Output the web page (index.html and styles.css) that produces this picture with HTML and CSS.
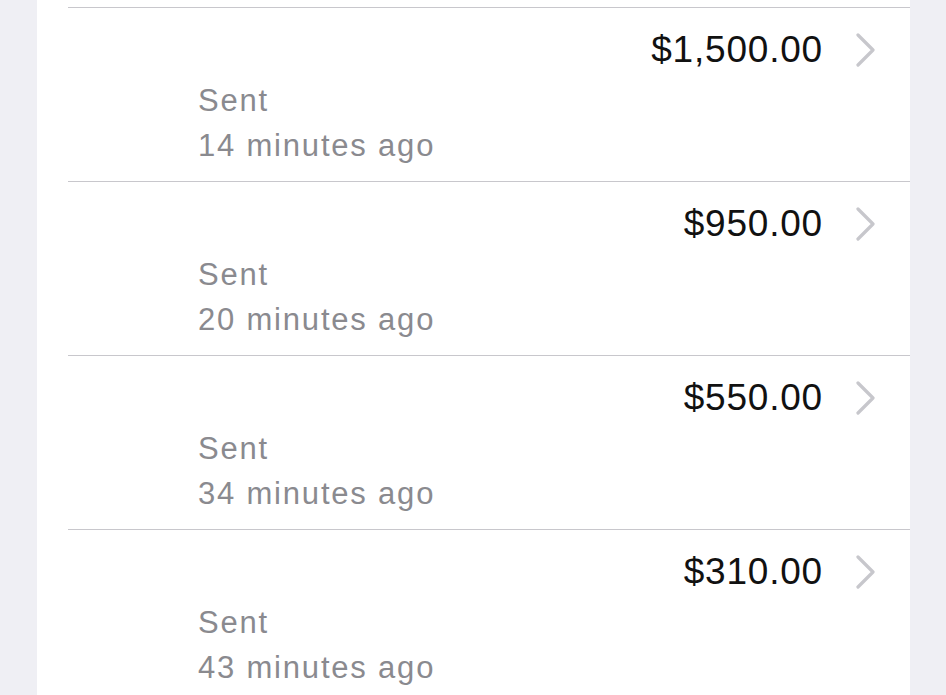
FILE: index.html
```html
<!DOCTYPE html>
<html lang="en">
<head>
  <meta charset="UTF-8">
  <title>Activity</title>
  <link rel="stylesheet" href="styles.css">
</head>
<body>
  <div class="panel">
    <ul class="list">
      <li class="item">
        <div class="top">
          <span class="amount">$1,500.00</span>
          <svg class="chevron" width="20" height="34" viewBox="0 0 20 34"><path d="M2 2 L17 17 L2 32" /></svg>
        </div>
        <div class="status">Sent</div>
        <div class="time">14 minutes ago</div>
      </li>
      <li class="item">
        <div class="top">
          <span class="amount">$950.00</span>
          <svg class="chevron" width="20" height="34" viewBox="0 0 20 34"><path d="M2 2 L17 17 L2 32" /></svg>
        </div>
        <div class="status">Sent</div>
        <div class="time">20 minutes ago</div>
      </li>
      <li class="item">
        <div class="top">
          <span class="amount">$550.00</span>
          <svg class="chevron" width="20" height="34" viewBox="0 0 20 34"><path d="M2 2 L17 17 L2 32" /></svg>
        </div>
        <div class="status">Sent</div>
        <div class="time">34 minutes ago</div>
      </li>
      <li class="item">
        <div class="top">
          <span class="amount">$310.00</span>
          <svg class="chevron" width="20" height="34" viewBox="0 0 20 34"><path d="M2 2 L17 17 L2 32" /></svg>
        </div>
        <div class="status">Sent</div>
        <div class="time">43 minutes ago</div>
      </li>
    </ul>
  </div>
</body>
</html>
```

FILE: styles.css
```css
html, body { margin: 0; height: 100%; }
body { background: #efeff4; font-family: "Liberation Sans", Arial, sans-serif; overflow: hidden; }
.panel { margin: 0 36px 0 37px; background: #fff; height: 695px; padding-top: 7px; box-sizing: border-box; }
.list { list-style: none; margin: 0; padding: 0; }
.item {
  margin-left: 31px;
  border-top: 1px solid #c8c7cc;
  height: 174px;
  padding: 20px 34px 0 130px;
  box-sizing: border-box;
}
.top { display: flex; justify-content: flex-end; align-items: center; height: 44px; gap: 33px; }
.amount { font-size: 37px; letter-spacing: 0.8px; color: #111; line-height: 44px; }
.chevron { display: block; }
.chevron path { fill: none; stroke: #c7c7cc; stroke-width: 3.2; stroke-linecap: round; stroke-linejoin: round; }
.status, .time { font-size: 31px; letter-spacing: 1.8px; color: #8a8a8f; line-height: 45px; }
.status { margin-top: 6px; }
```
